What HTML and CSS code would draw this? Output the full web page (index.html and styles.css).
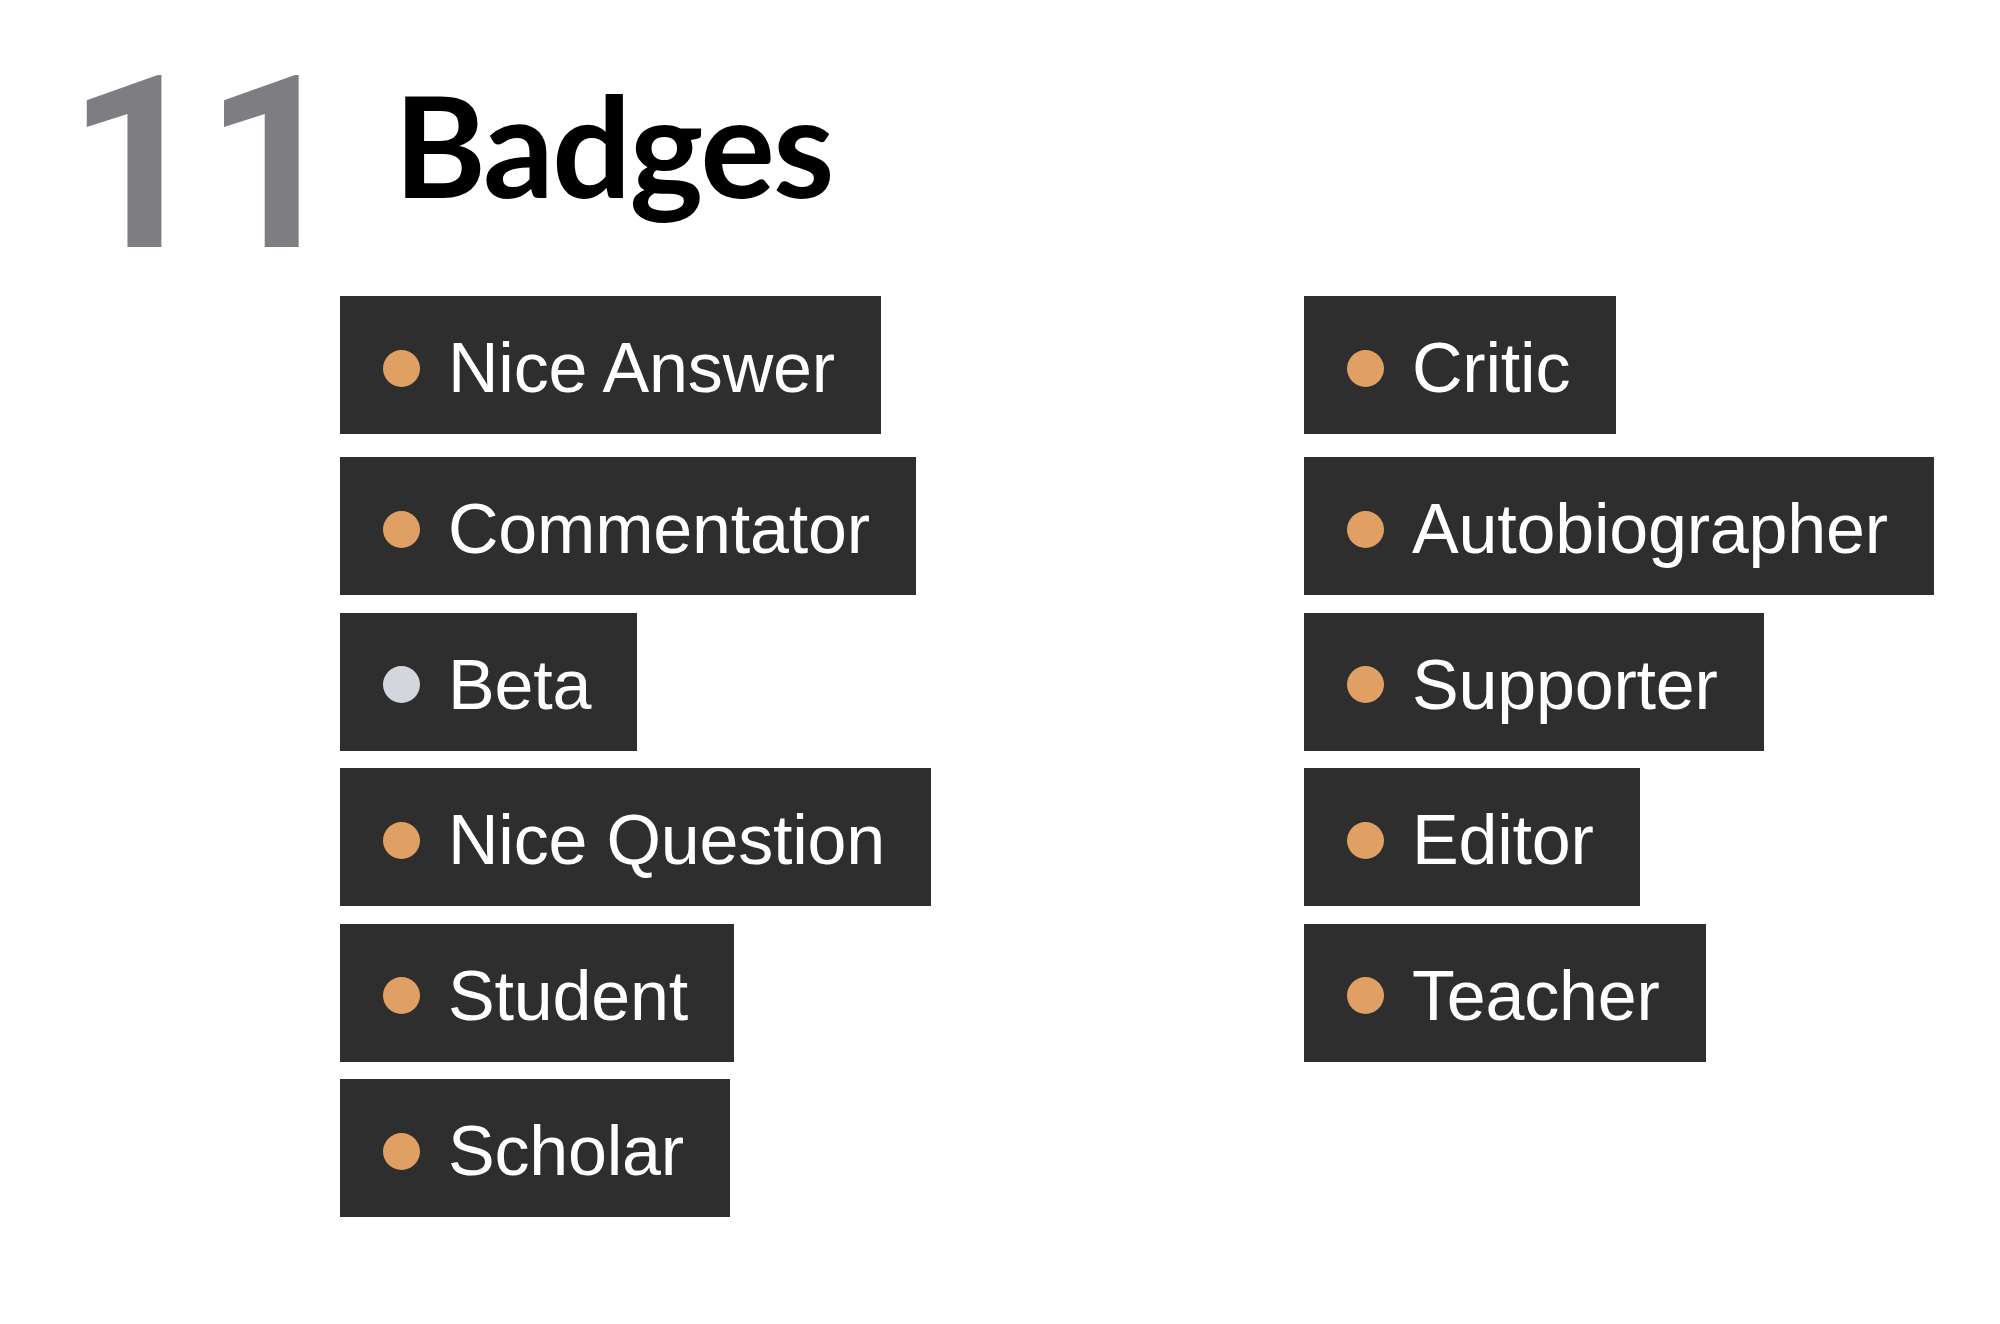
FILE: index.html
```html
<!DOCTYPE html>
<html lang="en">
<head>
<meta charset="utf-8">
<title>Badges</title>
<link rel="stylesheet" href="styles.css">
</head>
<body>
<div class="page">
  <div class="header">
    <div class="count">11</div>
    <h1 class="title">Badges</h1>
  </div>
  <div class="badge-grid">
    <div class="column">
      <div class="badge"><span class="dot bronze"></span><span class="label">Nice Answer</span></div>
      <div class="badge"><span class="dot bronze"></span><span class="label">Commentator</span></div>
      <div class="badge"><span class="dot silver"></span><span class="label">Beta</span></div>
      <div class="badge"><span class="dot bronze"></span><span class="label">Nice Question</span></div>
      <div class="badge"><span class="dot bronze"></span><span class="label">Student</span></div>
      <div class="badge"><span class="dot bronze"></span><span class="label">Scholar</span></div>
    </div>
    <div class="column">
      <div class="badge"><span class="dot bronze"></span><span class="label">Critic</span></div>
      <div class="badge"><span class="dot bronze"></span><span class="label">Autobiographer</span></div>
      <div class="badge"><span class="dot bronze"></span><span class="label">Supporter</span></div>
      <div class="badge"><span class="dot bronze"></span><span class="label">Editor</span></div>
      <div class="badge"><span class="dot bronze"></span><span class="label">Teacher</span></div>
    </div>
  </div>
</div>
</body>
</html>
```

FILE: styles.css
```css
html, body {
  margin: 0;
  padding: 0;
  background: #ffffff;
}

.page {
  width: 2000px;
  height: 1324px;
  box-sizing: border-box;
  padding-top: 43px;
}

.header {
  display: flex;
  align-items: flex-start;
  height: 253px;
}

.count {
  font-family: Roboto, "Open Sans", sans-serif;
  font-weight: 700;
  font-size: 241px;
  line-height: 241px;
  letter-spacing: -1px;
  color: #7e7e82;
  margin: 1px 0 0 67px;
  width: 327px;
  flex: none;
}

.title {
  margin: 31px 0 0 0;
  font-family: Lato, "Open Sans", sans-serif;
  font-weight: 700;
  font-size: 140px;
  line-height: 140px;
  color: #000000;
  letter-spacing: -2px;
}

.badge-grid {
  display: grid;
  grid-template-columns: 964px auto;
  padding-left: 340px;
}

.column {
  display: flex;
  flex-direction: column;
  align-items: flex-start;
  gap: 17.5px;
}

.column .badge:first-child {
  margin-bottom: 5.5px;
}

.badge {
  display: inline-flex;
  align-items: center;
  box-sizing: border-box;
  height: 138px;
  padding: 6px 46px 0 43px;
  background: #2e2e2e;
}

.dot {
  width: 37px;
  height: 37px;
  border-radius: 50%;
  margin-right: 28px;
  flex: none;
}

.bronze {
  background: #e0a064;
}

.silver {
  background: #d4d6dd;
}

.label {
  font-family: "Liberation Sans", Arial, sans-serif;
  font-size: 70px;
  line-height: 80px;
  letter-spacing: -0.2px;
  color: #ffffff;
  white-space: nowrap;
}
```
